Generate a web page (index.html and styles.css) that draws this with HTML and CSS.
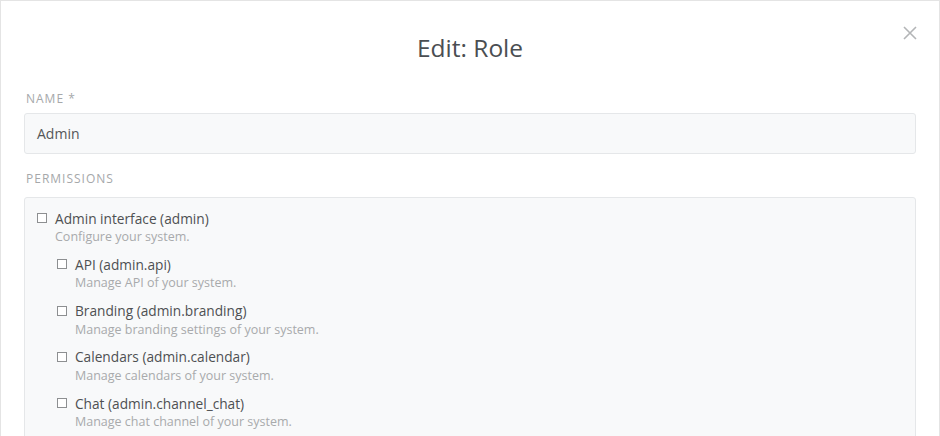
FILE: index.html
```html
<!DOCTYPE html>
<html lang="en">
<head>
<meta charset="utf-8">
<title>Edit: Role</title>
<link rel="stylesheet" href="styles.css">
</head>
<body>
<div class="modal">
  <div class="modal-header">
    <h1 class="modal-title">Edit: Role</h1>
    <button class="modal-close" aria-label="Close">
      <svg width="14" height="14" viewBox="0 0 14 14"><path d="M1 1 L13 13 M13 1 L1 13" stroke="#b3b5b7" stroke-width="1.6" fill="none"/></svg>
    </button>
  </div>
  <div class="modal-body">
    <div class="form-group">
      <label class="form-label">Name *</label>
      <div class="input">Admin</div>
    </div>
    <div class="form-group">
      <label class="form-label form-label-wide">Permissions</label>
      <div class="perm-box">
        <div class="perm">
          <div class="perm-row"><span class="checkbox"></span><span class="perm-name">Admin interface (admin)</span></div>
          <div class="perm-desc">Configure your system.</div>
        </div>
        <div class="perm nested">
          <div class="perm-row"><span class="checkbox"></span><span class="perm-name">API (admin.api)</span></div>
          <div class="perm-desc">Manage API of your system.</div>
        </div>
        <div class="perm nested">
          <div class="perm-row"><span class="checkbox"></span><span class="perm-name">Branding (admin.branding)</span></div>
          <div class="perm-desc">Manage branding settings of your system.</div>
        </div>
        <div class="perm nested">
          <div class="perm-row"><span class="checkbox"></span><span class="perm-name">Calendars (admin.calendar)</span></div>
          <div class="perm-desc">Manage calendars of your system.</div>
        </div>
        <div class="perm nested">
          <div class="perm-row"><span class="checkbox"></span><span class="perm-name">Chat (admin.channel_chat)</span></div>
          <div class="perm-desc">Manage chat channel of your system.</div>
        </div>
      </div>
    </div>
  </div>
</div>
</body>
</html>
```

FILE: styles.css
```css
html, body {
  margin: 0;
  padding: 0;
  background: #fff;
  height: 100%;
  overflow: hidden;
}
body {
  font-family: "Open Sans", "Noto Sans", sans-serif;
  color: #555;
}
.modal {
  box-sizing: border-box;
  width: 940px;
  height: 436px;
  border: 1px solid #e4e4e4;
  border-bottom: none;
  background: #fff;
  overflow: hidden;
}
.modal-header {
  position: relative;
  height: 89px;
  display: flex;
  justify-content: center;
  align-items: flex-start;
}
.modal-title {
  margin: 30px 0 0;
  font-size: 24.5px;
  font-weight: 400;
  line-height: 34px;
  color: #4a4e52;
}
.modal-close {
  position: absolute;
  top: 25px;
  right: 22px;
  border: 0;
  background: none;
  padding: 0;
  width: 14px;
  height: 14px;
  display: flex;
}
.modal-body {
  padding: 0 23px;
}
.form-group {
  display: flex;
  flex-direction: column;
}
.form-label {
  margin: 0 0 0 2px;
  font-size: 12px;
  line-height: 18px;
  letter-spacing: 1px;
  text-transform: uppercase;
  color: #a6a8aa;
  padding-bottom: 5px;
}
.form-label-wide {
  padding-bottom: 9px;
}
.input {
  box-sizing: border-box;
  height: 41px;
  border: 1px solid #e5e7e9;
  border-radius: 3px;
  background: #f8f9fa;
  padding: 0 12px;
  display: flex;
  align-items: center;
  font-size: 14px;
  color: #555658;
  margin-bottom: 16px;
}
.perm-box {
  border: 1px solid #e5e7e9;
  border-radius: 3px;
  background: #f8f9fa;
  padding: 10px 12px;
  display: flex;
  flex-direction: column;
  gap: 8.25px;
}
.perm.nested {
  padding-left: 20px;
}
.perm-row {
  display: flex;
  align-items: center;
  gap: 8px;
  height: 20px;
}
.checkbox {
  box-sizing: border-box;
  width: 10px;
  height: 10px;
  border: 1px solid #8d8f91;
  background: #fff;
  flex: none;
}
.perm-name {
  font-size: 13.7px;
  color: #4e5052;
}
.perm-desc {
  padding-left: 18px;
  font-size: 12.5px;
  line-height: 18px;
  color: #a8aaac;
}
```
